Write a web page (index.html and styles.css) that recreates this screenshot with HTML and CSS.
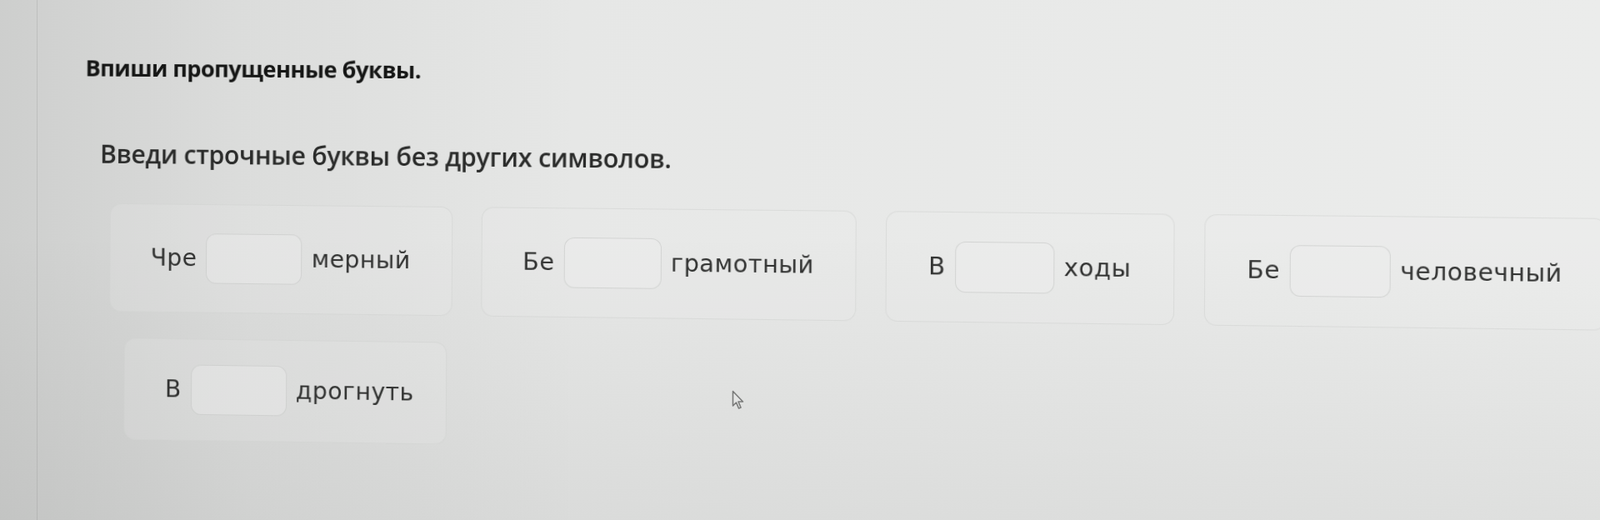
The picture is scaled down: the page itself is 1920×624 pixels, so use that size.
FILE: index.html
```html
<!DOCTYPE html>
<html lang="ru">
<head>
<meta charset="utf-8">
<title>Впиши пропущенные буквы</title>
<link rel="stylesheet" href="styles.css">
</head>
<body>
<div class="screen">
  <div class="edge"></div>
  <main class="task">
    <h1 class="title">Впиши пропущенные буквы.</h1>
    <p class="hint">Введи строчные буквы без других символов.</p>
    <div class="cards">
      <div class="card"><span class="part">Чре</span><span class="box"></span><span class="part">мерный</span></div>
      <div class="card"><span class="part">Бе</span><span class="box"></span><span class="part">грамотный</span></div>
      <div class="card"><span class="part">В</span><span class="box"></span><span class="part">ходы</span></div>
      <div class="card"><span class="part">Бе</span><span class="box"></span><span class="part">человечный</span></div>
      <div class="card card-second"><span class="part">В</span><span class="box"></span><span class="part">дрогнуть</span></div>
    </div>
  </main>
  <svg class="cursor" width="16" height="24" viewBox="0 0 16 24"><path d="M1.5 1.5 L1.5 19 L5.5 15 L8.5 22 L11 21 L8 14 L13.5 14 Z" fill="#e4e5e4" stroke="#7a7b7a" stroke-width="1.6" stroke-linejoin="round"/></svg>
</div>
</body>
</html>
```
FILE: styles.css
```css
html, body {
  margin: 0;
  padding: 0;
  width: 1920px;
  height: 624px;
  overflow: hidden;
}
.screen {
  position: relative;
  display: flex;
  align-items: flex-start;
  width: 1920px;
  height: 624px;
  overflow: hidden;
  background:
    linear-gradient(to right, rgba(60,62,60,0.13) 0px, rgba(60,62,60,0.05) 300px, rgba(60,62,60,0) 700px),
    linear-gradient(to bottom, rgba(60,62,60,0) 45%, rgba(60,62,60,0.07) 100%),
    linear-gradient(to right, #e3e4e3 0%, #e8e9e8 60%, #ebeceb 100%);
  font-family: "Open Sans", "Noto Sans", sans-serif;
  color: #1e1f1e;
}
.edge {
  width: 44px;
  height: 624px;
  flex: none;
  border-right: 1px solid rgba(120,122,120,0.2);
}
.task {
  flex: 1;
  min-width: 0;
  padding: 56px 0 0 58px;
  display: flex;
  flex-direction: column;
  transform-origin: 0 0;
  transform: perspective(1600px) rotateY(-1.8deg) rotate(0.3deg);
}
.title {
  margin: 0;
  font-size: 27px;
  line-height: 50px;
  font-weight: 700;
  letter-spacing: -0.6px;
  color: #151615;
}
.hint {
  margin: 58px 0 0 18px;
  font-size: 30px;
  line-height: 40px;
  font-weight: 600;
  color: #2a2b2a;
  letter-spacing: -0.3px;
}
.cards {
  margin: 39px 0 0 30px;
  display: flex;
  flex-wrap: wrap;
  column-gap: 34px;
  row-gap: 31px;
  width: 1820px;
}
.card {
  display: flex;
  align-items: center;
  gap: 11px;
  padding: 34px 48px;
  border: 1.5px solid rgba(205,207,205,0.55);
  border-radius: 14px;
  background: rgba(236,237,236,0.18);
}
.card-second {
  margin-left: 18px;
  padding: 30px 38px 30px 48px;
}
.part {
  font-family: "DejaVu Sans", "Noto Sans", sans-serif;
  font-size: 28px;
  letter-spacing: 0.4px;
  color: #323332;
  line-height: 30px;
}
.box {
  width: 114px;
  height: 60px;
  box-sizing: border-box;
  border: 1.5px solid rgba(195,197,195,0.6);
  border-radius: 12px;
  background: rgba(238,239,238,0.35);
}
.cursor {
  position: absolute;
  left: 878px;
  top: 468px;
}
```
